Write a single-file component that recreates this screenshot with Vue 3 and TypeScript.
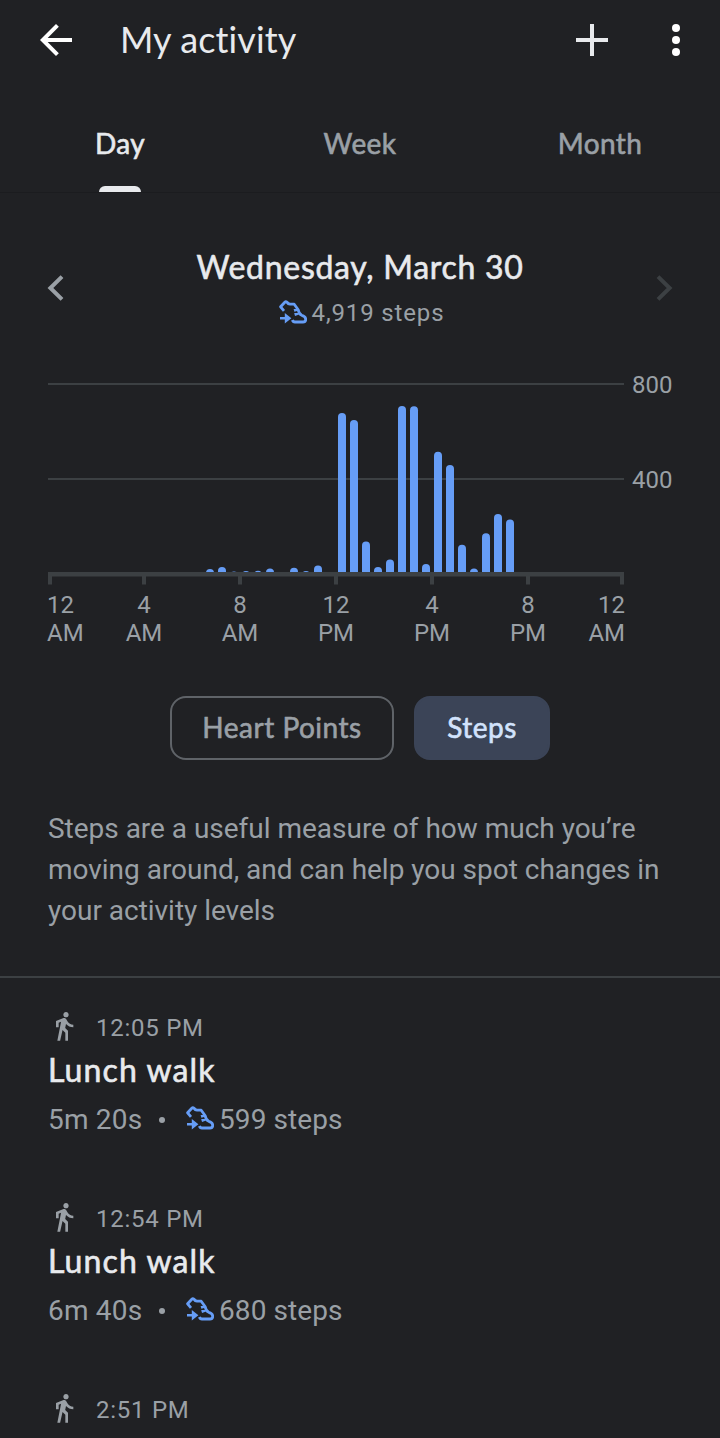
<script setup lang="ts">
import { defineComponent, h } from 'vue'

interface Bar { slot: number; height: number }
interface Walk { time: string; title?: string; duration?: string; steps?: string }

const tabs: string[] = ['Day', 'Week', 'Month']

const bars: Bar[] = [
  [13, 3], [14, 5], [15, 0.6], [16, 1], [17, 1.2], [18, 3.6], [20, 4.2], [21, 1], [22, 6.5],
  [24, 159], [25, 152], [26, 30.5], [27, 5], [28, 12.5], [29, 166], [30, 165.7], [31, 8],
  [32, 120.3], [33, 107], [34, 27.3], [35, 3.6], [36, 38.7], [37, 58], [38, 52.5],
].map(([slot, height]) => ({ slot, height }))

const ticks: number[] = [0, 94, 190, 286, 382, 478, 572]

const hours: [string, string][] = [
  ['12', 'AM'], ['4', 'AM'], ['8', 'AM'], ['12', 'PM'], ['4', 'PM'], ['8', 'PM'], ['12', 'AM'],
]

const walks: Walk[] = [
  { time: '12:05 PM', title: 'Lunch walk', duration: '5m 20s', steps: '599 steps' },
  { time: '12:54 PM', title: 'Lunch walk', duration: '6m 40s', steps: '680 steps' },
  { time: '2:51 PM' },
]

const ShoeIcon = defineComponent({
  render: () =>
    h('svg', { width: 28, height: 24, viewBox: '0 0 28 24', fill: 'none' }, [
      h('path', {
        d: 'M5 10.8L1.6 6.8L5.8 2.2Q6.8 1.2 7.9 2.1Q9.2 4 11 4.2H15.2L19.2 9.8Q20 14.2 22.8 15.3Q26.7 16.5 26.7 19.2Q26.7 22 24 22H16Q14 22 13.4 20M15 10.4L19.4 9.2M15.6 14.6L20.4 13',
        stroke: '#669df6', 'stroke-width': 2.8, 'stroke-linejoin': 'round',
      }),
      h('path', { d: 'M1 16.9H5.8V12.9L12.4 18.2L5.8 23.5V19.5H1Z', fill: '#669df6' }),
    ]),
})
</script>

<template>
  <main class="screen">
    <header class="bar">
      <svg class="back" width="48" height="48" viewBox="0 0 24 24"><path fill="#fff" d="M20 11H7.83l5.59-5.59L12 4l-8 8 8 8 1.41-1.41L7.83 13H20v-2z" /></svg>
      <h1>My activity</h1>
      <svg class="add" width="32" height="32" viewBox="0 0 32 32"><path fill="#e8eaed" d="M14 0h4v14h14v4H18v14h-4V18H0v-4h14z" /></svg>
      <svg width="8" height="32" viewBox="0 0 8 32" fill="#fff"><circle cx="4" cy="4" r="4" /><circle cx="4" cy="16" r="4" /><circle cx="4" cy="28" r="4" /></svg>
    </header>

    <nav class="tabs">
      <div v-for="(tab, i) in tabs" :key="tab" class="tab" :class="{ active: i === 0 }"><span>{{ tab }}</span></div>
    </nav>

    <section class="date">
      <svg width="18" height="28" viewBox="0 0 18 28" fill="none" stroke="#9aa0a6" stroke-width="4"><path d="M16 2.6L4.4 14L16 25.4" /></svg>
      <div class="middle">
        <h2>Wednesday, March 30</h2>
        <p class="total"><ShoeIcon /><span>4,919 steps</span></p>
      </div>
      <svg width="18" height="28" viewBox="0 0 18 28" fill="none" stroke="#3c4043" stroke-width="4"><path d="M2 2.6L13.6 14L2 25.4" /></svg>
    </section>

    <section class="chart">
      <div class="plot">
        <svg class="graph" width="576" height="202" viewBox="0 0 576 202">
          <path fill="#3c4043" d="M0 0h576v2H0zM0 95h576v2H0z" />
          <svg width="576" height="189" viewBox="0 0 576 189">
            <rect v-for="b in bars" :key="b.slot" :x="2 + b.slot * 12" :y="189 - b.height" width="8" :height="b.height + 8" rx="4" fill="#669df6" />
          </svg>
          <rect y="189" width="576" height="4.5" fill="#3c4043" />
          <rect v-for="t in ticks" :key="t" :x="t" y="193" width="4" height="8.5" fill="#3c4043" />
        </svg>
        <div class="scale"><span>800</span><span>400</span></div>
      </div>
      <div class="hours">
        <div v-for="(hour, i) in hours" :key="i"><span>{{ hour[0] }}</span><span>{{ hour[1] }}</span></div>
      </div>
    </section>

    <div class="chips">
      <button class="chip outline">Heart Points</button>
      <button class="chip selected">Steps</button>
    </div>

    <p class="about">Steps are a useful measure of how much you’re<br>moving around, and can help you spot changes in<br>your activity levels</p>

    <section class="list">
      <article v-for="walk in walks" :key="walk.time" class="walk">
        <div class="time">
          <svg width="32" height="32" viewBox="0 0 24 24"><path fill="#9aa0a6" d="M13.5 5.5c1.1 0 2-.9 2-2s-.9-2-2-2-2 .9-2 2 .9 2 2 2zM9.8 8.9L7 23h2.1l1.8-8 2.1 2v6h2v-7.5l-2.1-2 .6-3C14.8 12 16.8 13 19 13v-2c-1.9 0-3.5-1-4.3-2.4l-1-1.6c-.4-.6-1-1-1.7-1-.3 0-.5.1-.8.1L6 8.3V13h2V9.6l1.8-.7" /></svg>
          <span>{{ walk.time }}</span>
        </div>
        <template v-if="walk.title">
          <h3>{{ walk.title }}</h3>
          <div class="detail"><span class="duration">{{ walk.duration }}</span><i class="dot"></i><ShoeIcon /><span>{{ walk.steps }}</span></div>
        </template>
      </article>
    </section>
  </main>
</template>

<style>
body { background: #202124; }
</style>

<style scoped>
.screen { width: 720px; height: 1438px; overflow: hidden; background: #202124; color: #9aa0a6; font-family: Roboto, sans-serif; }
h1, h2, h3, p { margin: 0; }
svg { display: block; flex: none; }
h1, h2, h3, .tab, .chip { font-family: Lato, sans-serif; white-space: nowrap; }
h2, h3, .tab, .chip { -webkit-text-stroke: 0.6px currentColor; }

.bar { display: flex; align-items: center; height: 80px; padding: 0 40px 0 32px; }
h1 { flex: 1; margin: -2px 0 0 40px; font-size: 36px; font-weight: 400; line-height: 44px; letter-spacing: 0.1px; color: #e8eaed; }
.add { margin-right: 64px; }

.tabs { display: grid; grid-template-columns: repeat(3, 240px); height: 112px; border-bottom: 1px solid #1b1c1f; }
.tab { display: flex; flex-direction: column; align-items: center; justify-content: space-between; padding-top: 45px; font-size: 28px; font-weight: 400; line-height: 36px; letter-spacing: 0.4px; }
.tab.active { color: #e8eaed; }
.tab.active::after { content: ''; width: 42px; height: 6px; border-radius: 6px 6px 0 0; background: #e8eaed; }

.date { display: flex; justify-content: space-between; align-items: center; height: 84px; margin-top: 53px; padding: 0 46px; }
.middle { display: flex; flex-direction: column; align-items: center; height: 84px; }
h2 { margin-top: -1px; font-size: 32px; font-weight: 400; line-height: 44px; letter-spacing: 0.72px; color: #e8eaed; }
.total { display: flex; align-items: center; margin: 8px 0 0 3px; gap: 5px; font-size: 24px; line-height: 32px; letter-spacing: 0.85px; }
.total svg { margin-top: -3px; }

.chart { margin-top: 53px; padding-left: 48px; }
.plot { display: flex; gap: 8px; }
.scale { display: flex; flex-direction: column; gap: 67px; margin-top: -12px; font-size: 24px; line-height: 28px; }
.hours { display: grid; grid-template-columns: 49px repeat(5, 96px) 49px; margin: 6px 0 0 -1px; font-size: 24px; line-height: 28px; }
.hours div { display: flex; flex-direction: column; align-items: center; }
.hours div:first-child { align-items: flex-start; }
.hours div:last-child { align-items: flex-end; }

.chips { display: flex; justify-content: center; gap: 20px; margin-top: 49px; }
.chip { box-sizing: border-box; height: 64px; padding: 0 0 3px; border: 2px solid #5f6368; border-radius: 16px; font-size: 28px; font-weight: 400; line-height: 36px; letter-spacing: 0.5px; }
.outline { width: 224px; background: none; color: #9aa0a6; }
.selected { width: 136px; border-color: #3b4457; background: #3b4457; color: #d2e3fc; }

.about { margin: 48px 0 0 48px; font-size: 28px; line-height: 41px; letter-spacing: -0.02px; white-space: nowrap; }

.list { margin-top: 45px; border-top: 2px solid #3c4043; }
.walk { height: 159px; padding: 32px 48px 0; }
.time { display: flex; align-items: center; gap: 16px; height: 32px; font-size: 24px; letter-spacing: 0.75px; }
.time span { padding-top: 3px; }
h3 { margin-top: 6px; font-size: 32px; font-weight: 400; line-height: 44px; letter-spacing: 1.1px; color: #e8eaed; }
.detail { display: flex; align-items: center; margin-top: 8px; font-size: 28px; line-height: 40px; letter-spacing: 0.08px; }
.duration { width: 111px; letter-spacing: 0.2px; }
.dot { width: 6px; height: 6px; margin-right: 21px; border-radius: 50%; background: #9aa0a6; }
.detail svg { margin: -4px 5px 0 0; }
</style>
